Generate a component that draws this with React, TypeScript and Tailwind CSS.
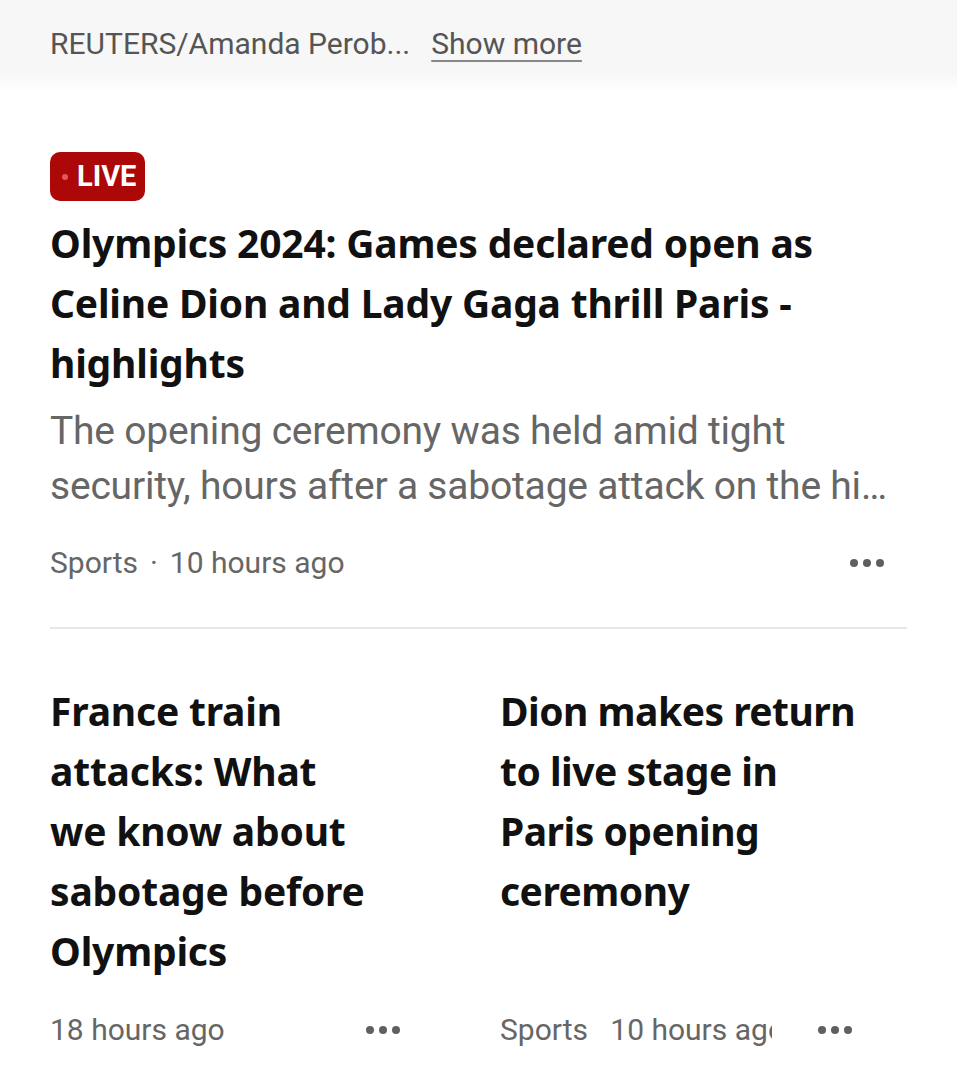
import React from 'react';

const Dots: React.FC = () => (
  <div className="flex items-center gap-[5px]">
    <span className="w-[8px] h-[8px] rounded-full bg-[#5f5f5f]" />
    <span className="w-[8px] h-[8px] rounded-full bg-[#5f5f5f]" />
    <span className="w-[8px] h-[8px] rounded-full bg-[#5f5f5f]" />
  </div>
);

const headline = "font-['Noto_Sans',sans-serif] font-bold text-[39px] leading-[60px] text-[#111] tracking-[-0.2px]";
const meta = "font-['Roboto',sans-serif] text-[30px] leading-[40px] text-[#666]";

const Lines: React.FC<{ lines: string[] }> = ({ lines }) => (
  <>
    {lines.map((l) => (
      <span key={l} className="block whitespace-nowrap">{l}</span>
    ))}
  </>
);

const App: React.FC = () => {
  return (
    <div className="w-[957px] h-[1070px] bg-white overflow-hidden">
      <div className="h-[92px] px-[50px] flex items-center gap-[21px] bg-gradient-to-b from-[#f7f7f7] from-80% to-white font-['Roboto',sans-serif] text-[30px] text-[#555] pb-[6px]">
        <span>REUTERS/Amanda Perob...</span>
        <span className="underline underline-offset-[6px] decoration-[2px] decoration-[#888]">Show more</span>
      </div>

      <div className="px-[50px] pt-[60px]">
        <div className="inline-flex items-center h-[49px] pl-[12px] pr-[9px] rounded-[10px] bg-[#ad0808] gap-[9px]">
          <span className="w-[6px] h-[6px] rounded-full bg-[#e8555a]" />
          <span className="font-['Roboto',sans-serif] font-bold text-[29px] text-white leading-none">LIVE</span>
        </div>

        <h1 className={`${headline} mt-[12px]`}>
          <Lines lines={['Olympics 2024: Games declared open as', 'Celine Dion and Lady Gaga thrill Paris -', 'highlights']} />
        </h1>
        <p className="mt-[11px] font-['Roboto',sans-serif] text-[39px] tracking-[-0.2px] leading-[55px] text-[#666]">
          <Lines lines={['The opening ceremony was held amid tight', 'security, hours after a sabotage attack on the hi…']} />
        </p>
        <div className="mt-[29px] flex items-center justify-between pr-[23px]">
          <span className={`${meta} flex items-center gap-[12px]`}>
            <span>Sports</span>
            <span>·</span>
            <span>10 hours ago</span>
          </span>
          <Dots />
        </div>

        <div className="mt-[44px] h-[2px] bg-[#e8e8e8]" />

        <div className="mt-[52px] grid grid-cols-[350px_352px] gap-x-[100px]">
          <div className="flex flex-col">
            <h2 className={headline}>
              <Lines lines={['France train', 'attacks: What', 'we know about', 'sabotage before', 'Olympics']} />
            </h2>
            <div className="mt-[29px] flex items-center justify-between">
              <span className={meta}>18 hours ago</span>
              <Dots />
            </div>
          </div>
          <div className="flex flex-col">
            <h2 className={`${headline} tracking-[-0.5px]`}>
              <Lines lines={['Dion makes return', 'to live stage in', 'Paris opening', 'ceremony']} />
            </h2>
            <div className="mt-auto pt-[29px] flex items-center justify-between">
              <span className={`${meta} w-[272px] overflow-hidden whitespace-nowrap`}>Sports&nbsp;&nbsp;&nbsp;10 hours ago</span>
              <Dots />
            </div>
          </div>
        </div>
      </div>
    </div>
  );
};

export default App;
